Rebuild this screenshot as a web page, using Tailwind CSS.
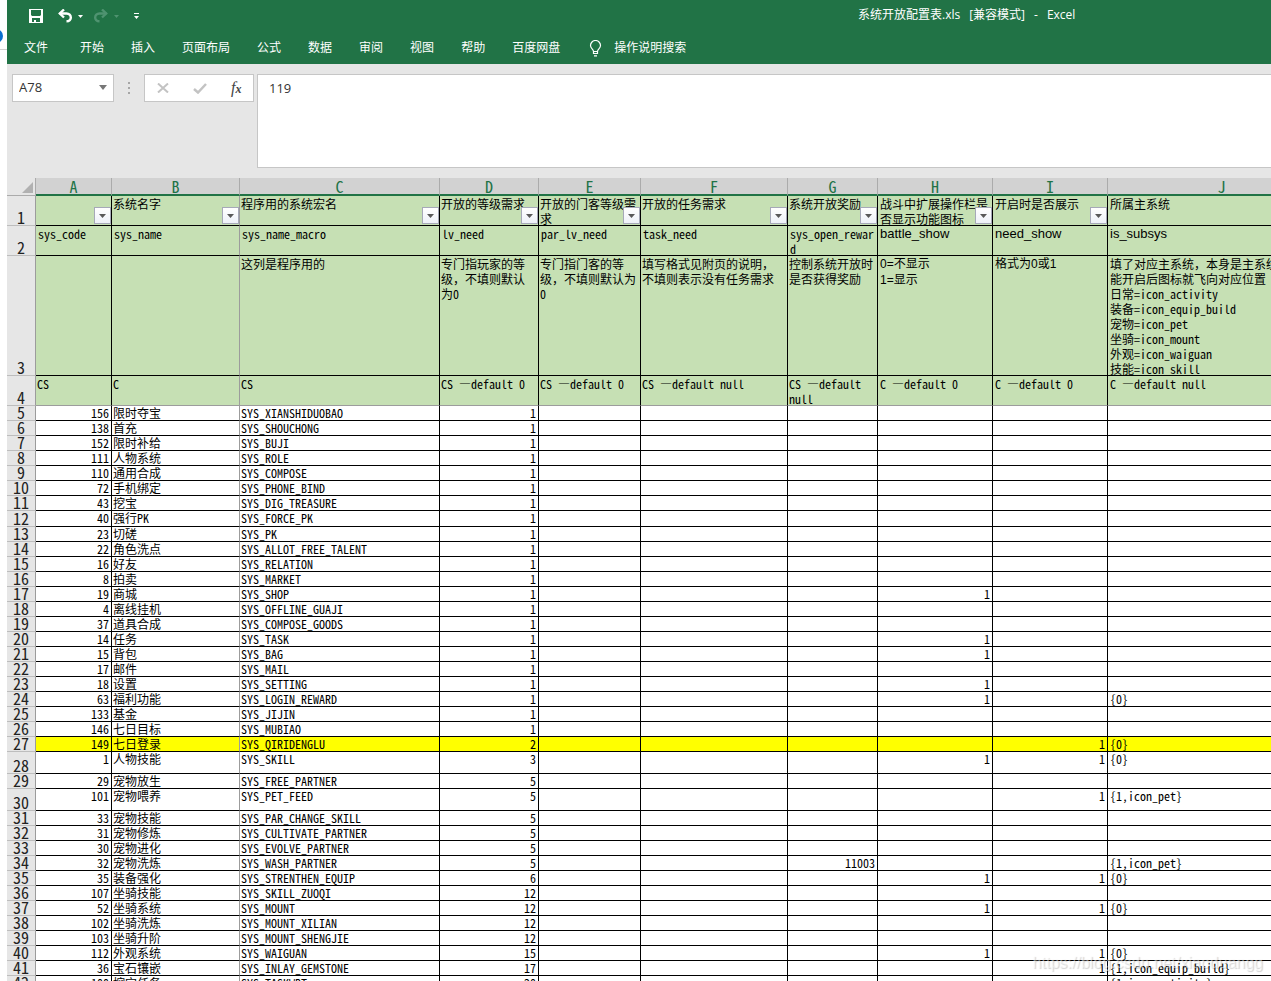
<!DOCTYPE html>
<html lang="zh-CN">
<head>
<meta charset="utf-8">
<title>系统开放配置表.xls [兼容模式] - Excel</title>
<script src="https://cdn.jsdelivr.net/npm/@tailwindcss/browser@4"></script>
</head>
<body class="h-screen overflow-hidden bg-white flex font-['Open_Sans','Noto_Sans_CJK_SC',sans-serif] text-[12px]">

<!-- Sliver of the window behind -->
<div class="w-[7px] shrink-0 overflow-hidden">
  <svg class="block" width="7" height="60" viewBox="0 0 7 60" aria-hidden="true"><circle cx="-4" cy="36" r="7" fill="#0a6fd0"/><path d="M0 49.5H7" stroke="#d0d0d0"/></svg>
</div>

<div class="flex-1 min-w-0 flex flex-col overflow-hidden">
  <header class="bg-[#217346] text-white h-16 shrink-0 overflow-hidden">
    <div class="h-8 pl-[22px] flex items-center">
      <button aria-label="保存" class="shrink-0"><svg class="block" width="14" height="14" viewBox="0 0 14 14"><path fill="#fff" fill-rule="evenodd" d="M0 0H14V14H0ZM2 1V6L3 7H11L12 6V1ZM3 9V13H5V11H7V13H11V9Z"/></svg></button>
      <button aria-label="撤消" class="ml-[15px] shrink-0"><svg class="block" width="14" height="14" viewBox="0 0 14 14" fill="none" stroke="#fff" stroke-width="2.400"><path d="M6 0.500L1.800 4.500L6 8.500"/><path d="M1.500 4.500H8.500C14 4.500 14.500 12.300 8.500 12.300"/></svg></button>
      <button aria-label="撤消列表" class="ml-[6px] shrink-0"><svg class="block" width="5" height="3" viewBox="0 0 5 3"><path fill="#fff" d="M0 0H5L2.500 3Z"/></svg></button>
      <button aria-label="恢复" class="ml-[11px] shrink-0"><svg class="block" width="14" height="14" viewBox="0 0 14 14" fill="none" stroke="#4f9370" stroke-width="2.400"><path d="M8 0.500L12.200 4.500L8 8.500"/><path d="M12.500 4.500H5.500C0 4.500 -0.500 12.300 5.500 12.300"/></svg></button>
      <button aria-label="恢复列表" class="ml-[6px] shrink-0"><svg class="block" width="5" height="3" viewBox="0 0 5 3"><path fill="#4f9370" d="M0 0H5L2.500 3Z"/></svg></button>
      <button aria-label="自定义快速访问工具栏" class="ml-[15px] shrink-0"><svg class="block" width="5" height="6" viewBox="0 0 5 6"><path fill="#fff" d="M0 0H5V1H0ZM0 3H5L2.500 6Z"/></svg></button>
      <h1 class="ml-[719px] flex gap-[9px] whitespace-nowrap leading-[30px] h-8 shrink-0"><span>系统开放配置表.xls</span><span>[兼容模式]</span><span>-</span><span>Excel</span></h1>
    </div>
    <nav class="h-8 pl-[17px] flex items-center gap-[27px] whitespace-nowrap" aria-label="功能区">
      <button class="mr-[5px]">文件</button>
      <button>开始</button>
      <button>插入</button>
      <button>页面布局</button>
      <button>公式</button>
      <button>数据</button>
      <button>审阅</button>
      <button>视图</button>
      <button>帮助</button>
      <button>百度网盘</button>
      <button class="ml-[2px] flex items-center gap-3"><svg width="13" height="17" viewBox="0 0 13 17" fill="none" stroke="#fff" stroke-width="1.200"><path d="M4.500 11.500C4.500 9 1.500 8.500 1.500 5.500A5 5 0 0 1 11.500 5.500C11.500 8.500 8.500 9 8.500 11.500V13.500H4.500ZM4.500 11.500H8.500M5 15.800H8"/></svg>操作说明搜索</button>
    </nav>
  </header>

  <section class="bg-[#e6e6e6] h-[114px] shrink-0 pt-[10px] pl-[5px] flex items-start text-[13px] text-[#333]" aria-label="编辑栏">
    <div class="w-[102px] h-7 shrink-0 bg-white border border-[#c6c6c6] flex items-center">
      <input aria-label="名称框" value="A78" class="min-w-0 flex-1 pl-[6px] outline-none">
      <button aria-label="名称列表" class="pr-[6px] pb-[2px]"><svg class="block" width="8" height="5" viewBox="0 0 8 5"><path fill="#777" d="M0 0H8L4 5Z"/></svg></button>
    </div>
    <div class="w-[30px] h-7 shrink-0 flex flex-col items-center justify-center gap-[3px]" aria-hidden="true">
      <i class="size-[2px] bg-[#a6a6a6]"></i><i class="size-[2px] bg-[#a6a6a6]"></i><i class="size-[2px] bg-[#a6a6a6]"></i>
    </div>
    <div class="w-[110px] h-7 shrink-0 bg-white border border-[#c6c6c6] flex items-center pl-3">
      <button aria-label="取消"><svg class="block" width="12" height="10" viewBox="0 0 12 10" stroke="#c3c3c3" stroke-width="2"><path d="M1 0.500L11 9.500M11 0.500L1 9.500"/></svg></button>
      <button aria-label="输入" class="ml-6"><svg class="block" width="14" height="11" viewBox="0 0 14 11" fill="none" stroke="#c3c3c3" stroke-width="2.500"><path d="M1 6L5 9.500L13 1"/></svg></button>
      <button aria-label="插入函数" class="ml-6 text-[#444] italic leading-4 font-['Liberation_Serif',serif] text-[16px]">f<span class="text-[12px] font-bold">x</span></button>
    </div>
    <textarea aria-label="编辑公式" class="ml-[3px] flex-1 min-w-0 h-[94px] resize-none bg-white border border-r-0 border-[#c6c6c6] pl-[11px] pt-[3px] leading-5 outline-none overflow-hidden">119</textarea>
  </section>

  <main class="relative flex-1 min-h-0 overflow-hidden text-black leading-[15px] font-['Noto_Sans_Mono_CJK_SC','Noto_Sans_CJK_SC','Liberation_Mono',monospace]">
    <table class="table-fixed w-[1329px] border-separate border-spacing-0">
      <colgroup>
        <col class="w-[29px]"><col class="w-[76px]"><col class="w-[128px]"><col class="w-[200px]"><col class="w-[99px]"><col class="w-[102px]"><col class="w-[147px]"><col class="w-[90px]"><col class="w-[115px]"><col class="w-[115px]"><col class="w-[228px]">
      </colgroup>
      <thead id="letters"></thead>
      <tbody id="rows"></tbody>
    </table>
    <p class="absolute right-2 bottom-2 text-[16px] leading-5 text-white/50 font-['Liberation_Sans',sans-serif] [text-shadow:1px_1px_1px_rgba(0,0,0,0.18)] pointer-events-none">https://blog.csdn.net/xiaoduangg</p>
  </main>
</div>

<script>
const ARIAL = "font-['Liberation_Sans','Noto_Sans_CJK_SC',sans-serif]";

// Column letters
document.getElementById('letters').innerHTML =
  '<tr><th scope="col" class="h-[18px] p-0 bg-[#e6e6e6] border-r border-b border-[#ababab]"><svg class="block ml-[15px] mt-[2px]" width="11" height="11" viewBox="0 0 11 11" aria-label="全选"><path fill="#b1b1b1" d="M11 0V11H0Z"/></svg></th>' +
  [...'ABCDEFGHIJ'].map(c => `<th scope="col" class="h-[18px] p-0 bg-[#d2d2d2] border-b-2 border-b-[#217346] border-r border-r-[#ababab] text-[#217346] text-[16px] leading-4 font-normal"><div class="h-4">${c}</div></th>`).join('') + '</tr>';

const filter = '<button aria-label="筛选" class="absolute right-0 bottom-[1px] size-[17px] border border-[#a6a9b8] bg-gradient-to-b from-white to-[#eef1f8] flex items-center justify-center"><svg width="7" height="4" viewBox="0 0 7 4"><path fill="#595959" d="M0 0H7L3.500 4Z"/></svg></button>';

// Heading rows 1-4
const heads = [
  [1, 'h-[30px]', 'h-[29px]', ['', '系统名字', '程序用的系统宏名', '开放的等级需求', '开放的门客等级需<br>求', '开放的任务需求', '系统开放奖励', '战斗中扩展操作栏是<br>否显示功能图标', '开启时是否展示', '所属主系统']],
  [2, 'h-[30px]', 'h-[29px]', ['sys_code', 'sys_name', 'sys_name_macro', 'lv_need', 'par_lv_need', 'task_need', 'sys_open_rewar<br>d', 'battle_show', 'need_show', 'is_subsys']],
  [3, 'h-[120px]', 'h-[119px]', ['', '', '这列是程序用的', '专门指玩家的等<br>级，不填则默认<br>为0', '专门指门客的等<br>级，不填则默认为<br>0', '填写格式见附页的说明，<br>不填则表示没有任务需求', '控制系统开放时<br>是否获得奖励', '0=不显示<br>1=显示', '格式为0或1', '填了对应主系统，本身是主系统功<br>能开启后图标就飞向对应位置<br>日常=icon_activity<br>装备=icon_equip_build<br>宠物=icon_pet<br>坐骑=icon_mount<br>外观=icon_waiguan<br>技能=icon_skill']],
  [4, 'h-[30px]', 'h-[29px]', ['CS', 'C', 'CS', 'CS —default 0', 'CS —default 0', 'CS —default null', 'CS —default<br>null', 'C —default 0', 'C —default 0', 'C —default null']],
];

// Data rows: id, name, macro, level, reward, battle flag, show flag, main system
const data = [
  [156,'限时夺宝','XIANSHIDUOBAO',1],[138,'首充','SHOUCHONG',1],[152,'限时补给','BUJI',1],[111,'人物系统','ROLE',1],
  [110,'通用合成','COMPOSE',1],[72,'手机绑定','PHONE_BIND',1],[43,'挖宝','DIG_TREASURE',1],[40,'强行PK','FORCE_PK',1],
  [23,'切磋','PK',1],[22,'角色洗点','ALLOT_FREE_TALENT',1],[16,'好友','RELATION',1],[8,'拍卖','MARKET',1],
  [19,'商城','SHOP',1,'',1],[4,'离线挂机','OFFLINE_GUAJI',1],[37,'道具合成','COMPOSE_GOODS',1],[14,'任务','TASK',1,'',1],
  [15,'背包','BAG',1,'',1],[17,'邮件','MAIL',1],[18,'设置','SETTING',1,'',1],[63,'福利功能','LOGIN_REWARD',1,'',1,'','{0}'],
  [133,'基金','JIJIN',1],[146,'七日目标','MUBIAO',1],[149,'七日登录','QIRIDENGLU',2,'','',1,'{0}'],[1,'人物技能','SKILL',3,'',1,1,'{0}'],
  [29,'宠物放生','FREE_PARTNER',5],[101,'宠物喂养','PET_FEED',5,'','',1,'{1,icon_pet}'],[33,'宠物技能','PAR_CHANGE_SKILL',5],
  [31,'宠物修炼','CULTIVATE_PARTNER',5],[30,'宠物进化','EVOLVE_PARTNER',5],[32,'宠物洗炼','WASH_PARTNER',5,11003,'','','{1,icon_pet}'],
  [35,'装备强化','STRENTHEN_EQUIP',6,'',1,1,'{0}'],[107,'坐骑技能','SKILL_ZUOQI',12],[52,'坐骑系统','MOUNT',12,'',1,1,'{0}'],
  [102,'坐骑洗炼','MOUNT_XILIAN',12],[103,'坐骑升阶','MOUNT_SHENGJIE',12],[112,'外观系统','WAIGUAN',15,'',1,1,'{0}'],
  [36,'宝石镶嵌','INLAY_GEMSTONE',17,'','',1,'{1,icon_equip_build}'],[100,'挖宝任务','TASKWBT',20,'','','','{1,icon_activity}'],
];

const rowHead = (n, h) => `<th scope="row" class="${h} p-0 bg-[#e6e6e6] border-r border-b border-r-[#9c9c9c] border-b-[#bdbdbd] text-[16px] leading-[12px] font-normal text-[#222] align-bottom"><div class="h-[14px]">${n}</div></th>`;

let html = heads.map(([n, h, inner, cells]) => '<tr>' + rowHead(n, h) + cells.map((t, i) => {
  const right = i === 1 ? 'border-r-[#9c9c9c]' : 'border-r-black';
  const bottom = n === 4 ? 'border-b-[#9c9c9c]' : 'border-b-black';
  const pad = n === 2 || i > 6 ? 'pl-[2px]' : 'pl-[1px]';
  const font = (n === 2 && i > 6) ? ARIAL + ' text-[13px]' : (n === 3 && (i === 7 || i === 8)) ? ARIAL + ' leading-4' : '';
  return `<td class="p-0 bg-[#c6e0b4] border-r border-b ${right} ${bottom} align-top"><div class="relative ${inner} ${pad} whitespace-nowrap ${font}">${t}${n === 1 && i < 9 ? filter : ''}</div></td>`;
}).join('') + '</tr>').join('');

html += data.map(([id, name, macro, lv, reward = '', battle = '', show = '', sub = ''], k) => {
  const n = k + 5;
  const [h, inner] = n === 12 ? ['h-[16px]', 'h-[15px]'] : (n === 28 || n === 30) ? ['h-[22px]', 'h-[21px]'] : ['h-[15px]', 'h-[14px]'];
  const bg = n === 27 ? 'bg-[#ffff00]' : 'bg-white';
  const cells = [id, name, 'SYS_' + macro, lv, '', '', reward, battle, show, sub];
  return '<tr>' + rowHead(n, h) + cells.map((t, i) => {
    const right = i === 1 ? 'border-r-[#9c9c9c]' : 'border-r-black';
    const align = typeof t === 'number' ? 'text-right' : 'text-left';
    const pad = i === 9 ? 'pl-[2px]' : 'pl-[1px]';
    return `<td class="p-0 ${bg} border-r border-b ${right} border-b-black align-top"><div class="${inner} ${pad} pr-[2px] leading-[13px] whitespace-nowrap ${align}">${t}</div></td>`;
  }).join('') + '</tr>';
}).join('');
document.getElementById('rows').innerHTML = html;
</script>
</body>
</html>
